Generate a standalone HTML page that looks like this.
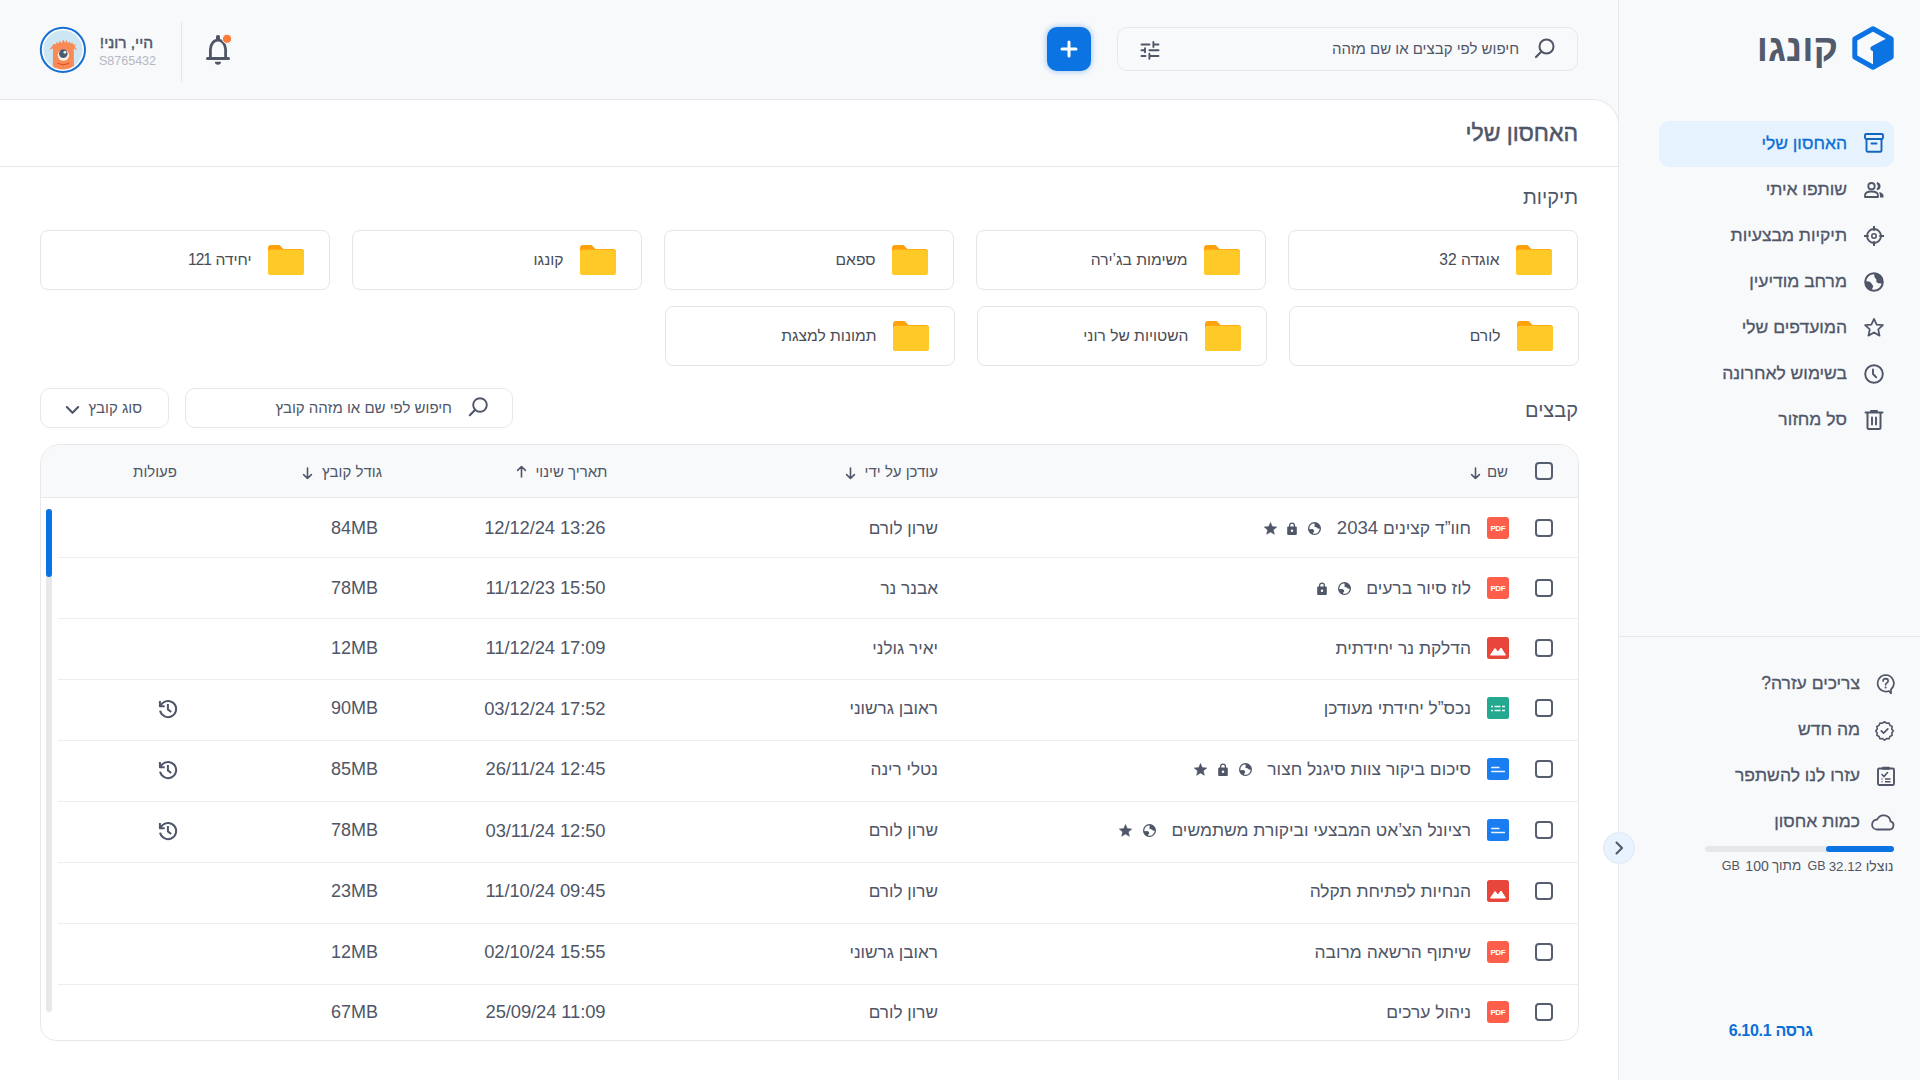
<!DOCTYPE html><html lang="he" dir="rtl"><head><meta charset="utf-8"><title>קונגו</title>
<style>
html,body{margin:0;padding:0;}
body{width:1920px;height:1080px;overflow:hidden;position:relative;background:#f8f9fb;font-family:"Liberation Sans",sans-serif;color:#4f5668;}
.t{position:absolute;white-space:nowrap;direction:rtl;}
.box{position:absolute;box-sizing:border-box;}
.med{-webkit-text-stroke:0.25px currentColor;}
</style></head><body>

<div class="box" style="left:1618px;top:0;width:302px;height:1080px;border-left:1px solid #e6e8ec;background:#f8f9fb"></div>
<svg style="position:absolute;left:1851px;top:26px;" width="44" height="44" viewBox="0 0 44 44"><path d="M22 2.8 L40.2 13 V31 L22 41.2 L3.8 31 V13 Z" fill="none" stroke="#0b74e2" stroke-width="5" stroke-linejoin="round"/><path d="M22 22.5 L39 13.5 V30.5 L22 40 Z" fill="#0b74e2"/><path d="M22 22.5 L38 14" stroke="#0b74e2" stroke-width="5" stroke-linecap="round"/></svg>
<div class="t" style="right:82px;top:24.06px;font-size:37.5px;line-height:49px;font-weight:700;color:#525a6e;">קונגו</div>
<div class="box" style="left:1659px;top:121px;width:235px;height:46px;border-radius:10px;background:#e6f2fd"></div>
<div class="t" style="right:73px;top:131.69px;font-size:17.5px;line-height:23px;font-weight:400;color:#0b6fd6;-webkit-text-stroke:0.3px currentColor">האחסון שלי</div>
<div class="t" style="right:73px;top:177.69px;font-size:17.5px;line-height:23px;font-weight:400;color:#4f5668;-webkit-text-stroke:0.3px currentColor">שותפו איתי</div>
<div class="t" style="right:73px;top:223.69px;font-size:17.5px;line-height:23px;font-weight:400;color:#4f5668;-webkit-text-stroke:0.3px currentColor">תיקיות מבצעיות</div>
<div class="t" style="right:73px;top:269.69px;font-size:17.5px;line-height:23px;font-weight:400;color:#4f5668;-webkit-text-stroke:0.3px currentColor">מרחב מודיעין</div>
<div class="t" style="right:73px;top:315.69px;font-size:17.5px;line-height:23px;font-weight:400;color:#4f5668;-webkit-text-stroke:0.3px currentColor">המועדפים שלי</div>
<div class="t" style="right:73px;top:361.69px;font-size:17.5px;line-height:23px;font-weight:400;color:#4f5668;-webkit-text-stroke:0.3px currentColor">בשימוש לאחרונה</div>
<div class="t" style="right:73px;top:407.69px;font-size:17.5px;line-height:23px;font-weight:400;color:#4f5668;-webkit-text-stroke:0.3px currentColor">סל מחזור</div>
<svg style="position:absolute;left:1864px;top:133px;" width="20" height="20" viewBox="0 0 20 20"><rect x="1" y="1" width="18" height="5" rx="1.2" fill="none" stroke="#1565c0" stroke-width="1.9"/><path d="M2.5 6 V17.5 a1.3 1.3 0 0 0 1.3 1.3 H16.2 a1.3 1.3 0 0 0 1.3 -1.3 V6" fill="none" stroke="#1565c0" stroke-width="1.9"/><path d="M7.5 10.5 H12.5" stroke="#1565c0" stroke-width="1.9" stroke-linecap="round"/></svg>
<svg style="position:absolute;left:1864px;top:182px;" width="20" height="16" viewBox="0 0 20 16"><circle cx="7.5" cy="4.2" r="3.2" fill="none" stroke="#4f5668" stroke-width="1.8"/><path d="M1 15 V13.5 C1 11 3.5 9.5 7.5 9.5 C11.5 9.5 14 11 14 13.5 V15 Z" fill="none" stroke="#4f5668" stroke-width="1.8" stroke-linejoin="round"/><path d="M13 1 A3.3 3.3 0 0 1 13 7.5 A4 4 0 0 0 13 1Z" fill="#4f5668" stroke="#4f5668" stroke-width="1.6"/><path d="M15 10 C18 10.5 19.5 12 19.5 14 V15.5 H16 V14 C16 12.5 15.5 11 15 10Z" fill="#4f5668"/></svg>
<svg style="position:absolute;left:1864px;top:226px;" width="20" height="20" viewBox="0 0 20 20"><circle cx="10" cy="10" r="7" fill="none" stroke="#4f5668" stroke-width="1.8"/><circle cx="10" cy="10" r="2.2" fill="none" stroke="#4f5668" stroke-width="1.6"/><path d="M10 0.5V4 M10 16V19.5 M0.5 10H4 M16 10H19.5" stroke="#4f5668" stroke-width="2" stroke-linecap="round"/></svg>
<svg style="position:absolute;left:1864px;top:272px;" width="20" height="20" viewBox="0 0 20 20"><circle cx="10" cy="10" r="8.8" fill="none" stroke="#4f5668" stroke-width="2"/><path d="M10 1.5 C13 1.5 17 3 18.5 7 L18 12 C16.5 11 14.5 12 13 10.5 C11.5 9 13.5 8 11.5 6.5 C10 5.5 10.5 3 10 1.5Z" fill="#4f5668"/><path d="M1.5 9.5 C4 9 6.5 9.5 7.5 11.5 C8 13 9.5 13 9 15 C8.5 16.5 7.5 17.5 7.5 18.5 C4 17.5 1.5 14 1.5 9.5Z" fill="#4f5668"/></svg>
<svg style="position:absolute;left:1863px;top:317px;" width="22" height="21" viewBox="0 0 24 23"><path d="M12 2 L14.9 8.3 L21.8 9 L16.6 13.6 L18.1 20.4 L12 16.9 L5.9 20.4 L7.4 13.6 L2.2 9 L9.1 8.3 Z" fill="none" stroke="#4f5668" stroke-width="1.9" stroke-linejoin="round"/></svg>
<svg style="position:absolute;left:1864px;top:364px;" width="20" height="20" viewBox="0 0 20 20"><circle cx="10" cy="10" r="8.8" fill="none" stroke="#4f5668" stroke-width="1.9"/><path d="M9 5.5 V10 L12.3 13.3" fill="none" stroke="#4f5668" stroke-width="1.9" stroke-linecap="round" stroke-linejoin="round"/></svg>
<svg style="position:absolute;left:1864px;top:410px;" width="20" height="20" viewBox="0 0 20 20"><path d="M1.5 2.5 H18.5" stroke="#4f5668" stroke-width="2" stroke-linecap="round"/><path d="M7 1 H13" stroke="#4f5668" stroke-width="2" stroke-linecap="round"/><path d="M3.5 3 V17.5 a1.5 1.5 0 0 0 1.5 1.5 H15 a1.5 1.5 0 0 0 1.5 -1.5 V3" fill="none" stroke="#4f5668" stroke-width="2"/><path d="M8 7.5 V14.5 M12 7.5 V14.5" stroke="#4f5668" stroke-width="1.9" stroke-linecap="round"/></svg>
<div class="box" style="left:1619px;top:636px;width:301px;height:1px;background:#e6e8ec"></div>
<div class="t" style="right:60px;top:671.99px;font-size:17.5px;line-height:23px;font-weight:400;color:#4f5668;-webkit-text-stroke:0.3px currentColor">צריכים עזרה?</div>
<div class="t" style="right:60px;top:717.99px;font-size:17.5px;line-height:23px;font-weight:400;color:#4f5668;-webkit-text-stroke:0.3px currentColor">מה חדש</div>
<div class="t" style="right:60px;top:763.99px;font-size:17.5px;line-height:23px;font-weight:400;color:#4f5668;-webkit-text-stroke:0.3px currentColor">עזרו לנו להשתפר</div>
<div class="t" style="right:60px;top:809.99px;font-size:17.5px;line-height:23px;font-weight:400;color:#4f5668;-webkit-text-stroke:0.3px currentColor">כמות אחסון</div>
<svg style="position:absolute;left:1876px;top:674px;" width="19" height="20" viewBox="0 0 19 20"><path d="M9.5 1 A8.3 8.3 0 1 0 13 17 L15 19.5 L15 15.5 A8.3 8.3 0 0 0 9.5 1Z" fill="none" stroke="#4f5668" stroke-width="1.7" stroke-linejoin="round"/><path d="M7 7.3 C7 5.5 8.3 4.6 9.6 4.6 C11 4.6 12.2 5.6 12.2 7 C12.2 8.8 9.6 9 9.6 11" fill="none" stroke="#4f5668" stroke-width="1.6" stroke-linecap="round"/><circle cx="9.6" cy="13.6" r="1" fill="#4f5668"/></svg>
<svg style="position:absolute;left:1874px;top:720px;" width="21" height="21" viewBox="0 0 24 24"><path d="M12 2 L14.3 3.7 L17.2 3.4 L18.2 6.1 L20.8 7.4 L20.3 10.2 L22 12.5 L20.3 14.7 L20.8 17.5 L18.2 18.8 L17.2 21.5 L14.3 21.2 L12 23 L9.7 21.2 L6.8 21.5 L5.8 18.8 L3.2 17.5 L3.7 14.7 L2 12.5 L3.7 10.2 L3.2 7.4 L5.8 6.1 L6.8 3.4 L9.7 3.7 Z" fill="none" stroke="#4f5668" stroke-width="1.8" stroke-linejoin="round"/><path d="M8.3 12.5 L11 15 L15.8 10.2" fill="none" stroke="#4f5668" stroke-width="1.9" stroke-linecap="round" stroke-linejoin="round"/></svg>
<svg style="position:absolute;left:1877px;top:766px;" width="18" height="20" viewBox="0 0 18 20"><rect x="1" y="2.5" width="16" height="16.5" rx="1.2" fill="none" stroke="#4f5668" stroke-width="1.9"/><rect x="5" y="0.8" width="8" height="3" rx="1" fill="#4f5668"/><path d="M5 8.5 L7 10.5 L10.5 6.5" fill="none" stroke="#4f5668" stroke-width="1.6" stroke-linecap="round"/><path d="M4.5 13 H5.5 M8 13 H13.5 M4.5 15.8 H5.5 M8 15.8 H13.5" stroke="#4f5668" stroke-width="1.5"/></svg>
<svg style="position:absolute;left:1871px;top:813px;" width="24" height="18" viewBox="0 0 24 18"><path d="M6 16.5 H18.5 A4.2 4.2 0 0 0 19.5 8.3 A7 7 0 0 0 6.2 6.5 A5 5 0 0 0 6 16.5 Z" fill="none" stroke="#4f5668" stroke-width="1.8" stroke-linejoin="round"/></svg>
<div class="box" style="left:1705px;top:846px;width:189px;height:6px;border-radius:3px;background:#e6e7ea"></div>
<div class="box" style="left:1826px;top:846px;width:68px;height:6px;border-radius:3px;background:#0b74e2"></div>
<div class="t" style="right:26.5px;top:856.65px;font-size:14px;line-height:18px;font-weight:400;color:#505562;">נוצלו</div>
<div class="t" style="right:58px;top:857.77px;font-size:13.3px;line-height:17px;font-weight:400;color:#505562;">32.12</div>
<div class="t" style="right:94.5px;top:858.27px;font-size:12.5px;line-height:16px;font-weight:400;color:#505562;">GB</div>
<div class="t" style="right:118.79999999999995px;top:856.67px;font-size:13.5px;line-height:18px;font-weight:400;color:#505562;">מתוך</div>
<div class="t" style="right:151.29999999999995px;top:857.26px;font-size:14px;line-height:18px;font-weight:400;color:#505562;">100</div>
<div class="t" style="right:180.20000000000005px;top:858.27px;font-size:12.5px;line-height:16px;font-weight:400;color:#505562;">GB</div>
<div class="t" style="right:107.5px;top:1019.76px;font-size:16px;line-height:21px;font-weight:700;color:#0a6fd8;letter-spacing:-0.3px">גרסה 6.10.1</div>
<div class="box" style="left:1117px;top:27px;width:461px;height:44px;border:1px solid #e6e8ec;border-radius:10px;background:#f8f9fb"></div>
<div class="t" style="right:401px;top:38.80px;font-size:15px;line-height:20px;font-weight:400;color:#4f5668;">חיפוש לפי קבצים או שם מזהה</div>
<svg style="position:absolute;left:1534px;top:38px;" width="22" height="21" viewBox="0 0 22 21"><circle cx="12.5" cy="8.5" r="7" fill="none" stroke="#4f5668" stroke-width="2"/><path d="M7.5 13.5 L2 19" stroke="#4f5668" stroke-width="2.2" stroke-linecap="round"/></svg>
<svg style="position:absolute;left:1140px;top:41px;" width="20" height="19" viewBox="0 0 20 19"><path d="M1.5 3.5 H9.5 M13.4 3.5 H18.5 M13.4 1 V6 M1.5 9.3 H5 M5 7.3 V11.3 M9.4 9.3 H18.5 M1.5 15 H5.5 M9.4 15 H18.5 M9.4 12.8 V17.8" stroke="#4f5668" stroke-width="1.9" stroke-linecap="round"/></svg>
<div class="box" style="left:1047px;top:27px;width:44px;height:44px;border-radius:10px;background:#0b74e2;box-shadow:0 0 6px rgba(11,116,226,0.45)"></div>
<svg style="position:absolute;left:1060px;top:40px;" width="18" height="18" viewBox="0 0 18 18"><path d="M9 2 V16 M2 9 H16" stroke="#fff" stroke-width="3" stroke-linecap="round"/></svg>
<svg style="position:absolute;left:200px;top:30px;" width="36" height="40" viewBox="0 0 36 40"><rect x="16" y="5" width="4" height="5" rx="1.6" fill="#4f5668"/><path d="M10.4 27.5 V19.5 A7.6 9.4 0 0 1 25.6 19.5 V27.5" fill="none" stroke="#4f5668" stroke-width="2.8"/><rect x="6" y="27" width="24" height="3" rx="1.5" fill="#4f5668"/><path d="M14.9 31.8 H21 A3.05 3.05 0 0 1 14.9 31.8 Z" fill="#4f5668"/><circle cx="27" cy="8.8" r="4.6" fill="#fb7b3a" stroke="#f8f9fb" stroke-width="1"/></svg>
<div class="box" style="left:181px;top:22px;width:1px;height:60px;background:#e3e5e9"></div>
<div class="t" style="right:1767px;top:32.78px;font-size:15.5px;line-height:20px;font-weight:400;color:#4f5668;-webkit-text-stroke:0.45px currentColor">היי, רוני!</div>
<div class="t" style="right:1764px;top:52.67px;font-size:12.5px;line-height:16px;font-weight:400;color:#b3b8c2;">S8765432</div>
<svg style="position:absolute;left:39px;top:26px;" width="48" height="48" viewBox="0 0 48 48"><circle cx="23.9" cy="23.85" r="22.1" fill="#fff" stroke="#176fd2" stroke-width="2"/><circle cx="23.9" cy="23.85" r="19.6" fill="#cde6f4"/><clipPath id="av"><circle cx="23.9" cy="23.85" r="19.6"/></clipPath><g clip-path="url(#av)"><path d="M13.8 19.5 L10.2 23.8 L14 22.6 L13.8 48 L35 48 L34.8 22.6 L38.2 24.6 L35.5 20 L37.2 18.8 L33.5 18.3 L34 16.5 L31.3 17.5 L31 15 L29 17.2 L27.5 14 L26 16.8 L24.2 13.2 L22.8 17.2 L20.8 14.8 L19.8 17.5 L17.5 15.8 L17.2 18.2 L14 18 Z" fill="#f88b55"/><circle cx="24.4" cy="29.2" r="5.6" fill="#fdf3e8"/><circle cx="24.3" cy="27.6" r="4.3" fill="#4a5a70"/><circle cx="25.9" cy="26.3" r="1.4" fill="#fff"/><path d="M18.9 37.3 Q24.3 39.8 29.7 37.3" fill="none" stroke="#e0532e" stroke-width="1.2" stroke-linecap="round"/></g></svg>
<div class="box" style="left:0;top:99px;width:1619px;height:990px;background:#fff;border-top:1px solid #e6e8ec;border-right:1px solid #e6e8ec;border-top-right-radius:26px"></div>
<div class="t" style="right:342px;top:117.83px;font-size:23px;line-height:30px;font-weight:400;color:#4f5668;-webkit-text-stroke:0.5px currentColor">האחסון שלי</div>
<div class="box" style="left:0;top:166px;width:1618px;height:1px;background:#e6e8ec"></div>
<div class="t" style="right:342px;top:183.67px;font-size:20px;line-height:26px;font-weight:400;color:#4f5668;">תיקיות</div>
<div class="box" style="left:1288px;top:230px;width:290px;height:60px;border:1px solid #e4e5e8;border-radius:8px;background:#fff"></div>
<svg style="position:absolute;left:1516px;top:245px;" width="36" height="30" viewBox="0 0 36 30"><path d="M0 3 A3 3 0 0 1 3 0 H11.5 L15.5 4 H33 A3 3 0 0 1 36 7 V8 H0Z" fill="#ffa10a"/><rect x="0" y="4.8" width="36" height="25.2" rx="2.6" fill="#ffca28"/></svg>
<div class="t" style="right:420.5px;top:250.07px;font-size:15.6px;line-height:20px;font-weight:400;color:#484c55;">אוגדה 32</div>
<div class="box" style="left:976px;top:230px;width:290px;height:60px;border:1px solid #e4e5e8;border-radius:8px;background:#fff"></div>
<svg style="position:absolute;left:1204px;top:245px;" width="36" height="30" viewBox="0 0 36 30"><path d="M0 3 A3 3 0 0 1 3 0 H11.5 L15.5 4 H33 A3 3 0 0 1 36 7 V8 H0Z" fill="#ffa10a"/><rect x="0" y="4.8" width="36" height="25.2" rx="2.6" fill="#ffca28"/></svg>
<div class="t" style="right:732.5px;top:250.07px;font-size:15.6px;line-height:20px;font-weight:400;color:#484c55;">משימות בג’ירה</div>
<div class="box" style="left:664px;top:230px;width:290px;height:60px;border:1px solid #e4e5e8;border-radius:8px;background:#fff"></div>
<svg style="position:absolute;left:892px;top:245px;" width="36" height="30" viewBox="0 0 36 30"><path d="M0 3 A3 3 0 0 1 3 0 H11.5 L15.5 4 H33 A3 3 0 0 1 36 7 V8 H0Z" fill="#ffa10a"/><rect x="0" y="4.8" width="36" height="25.2" rx="2.6" fill="#ffca28"/></svg>
<div class="t" style="right:1044.5px;top:250.07px;font-size:15.6px;line-height:20px;font-weight:400;color:#484c55;">ספאם</div>
<div class="box" style="left:352px;top:230px;width:290px;height:60px;border:1px solid #e4e5e8;border-radius:8px;background:#fff"></div>
<svg style="position:absolute;left:580px;top:245px;" width="36" height="30" viewBox="0 0 36 30"><path d="M0 3 A3 3 0 0 1 3 0 H11.5 L15.5 4 H33 A3 3 0 0 1 36 7 V8 H0Z" fill="#ffa10a"/><rect x="0" y="4.8" width="36" height="25.2" rx="2.6" fill="#ffca28"/></svg>
<div class="t" style="right:1356.5px;top:250.07px;font-size:15.6px;line-height:20px;font-weight:400;color:#484c55;">קונגו</div>
<div class="box" style="left:40px;top:230px;width:290px;height:60px;border:1px solid #e4e5e8;border-radius:8px;background:#fff"></div>
<svg style="position:absolute;left:268px;top:245px;" width="36" height="30" viewBox="0 0 36 30"><path d="M0 3 A3 3 0 0 1 3 0 H11.5 L15.5 4 H33 A3 3 0 0 1 36 7 V8 H0Z" fill="#ffa10a"/><rect x="0" y="4.8" width="36" height="25.2" rx="2.6" fill="#ffca28"/></svg>
<div class="t" style="right:1668.5px;top:250.07px;font-size:15.6px;line-height:20px;font-weight:400;color:#484c55;">יחידה <span style="letter-spacing:-1px">121</span></div>
<div class="box" style="left:1289px;top:306px;width:290px;height:60px;border:1px solid #e4e5e8;border-radius:8px;background:#fff"></div>
<svg style="position:absolute;left:1517px;top:321px;" width="36" height="30" viewBox="0 0 36 30"><path d="M0 3 A3 3 0 0 1 3 0 H11.5 L15.5 4 H33 A3 3 0 0 1 36 7 V8 H0Z" fill="#ffa10a"/><rect x="0" y="4.8" width="36" height="25.2" rx="2.6" fill="#ffca28"/></svg>
<div class="t" style="right:419.5px;top:326.07px;font-size:15.6px;line-height:20px;font-weight:400;color:#484c55;">לורם</div>
<div class="box" style="left:977px;top:306px;width:290px;height:60px;border:1px solid #e4e5e8;border-radius:8px;background:#fff"></div>
<svg style="position:absolute;left:1205px;top:321px;" width="36" height="30" viewBox="0 0 36 30"><path d="M0 3 A3 3 0 0 1 3 0 H11.5 L15.5 4 H33 A3 3 0 0 1 36 7 V8 H0Z" fill="#ffa10a"/><rect x="0" y="4.8" width="36" height="25.2" rx="2.6" fill="#ffca28"/></svg>
<div class="t" style="right:731.5px;top:326.07px;font-size:15.6px;line-height:20px;font-weight:400;color:#484c55;">השטויות של רוני</div>
<div class="box" style="left:665px;top:306px;width:290px;height:60px;border:1px solid #e4e5e8;border-radius:8px;background:#fff"></div>
<svg style="position:absolute;left:893px;top:321px;" width="36" height="30" viewBox="0 0 36 30"><path d="M0 3 A3 3 0 0 1 3 0 H11.5 L15.5 4 H33 A3 3 0 0 1 36 7 V8 H0Z" fill="#ffa10a"/><rect x="0" y="4.8" width="36" height="25.2" rx="2.6" fill="#ffca28"/></svg>
<div class="t" style="right:1043.5px;top:326.07px;font-size:15.6px;line-height:20px;font-weight:400;color:#484c55;">תמונות למצגת</div>
<div class="t" style="right:342px;top:396.57px;font-size:20px;line-height:26px;font-weight:400;color:#4f5668;">קבצים</div>
<div class="box" style="left:185px;top:388px;width:328px;height:40px;border:1px solid #e6e8ec;border-radius:10px;background:#fff"></div>
<div class="t" style="right:1468px;top:397.60px;font-size:15px;line-height:20px;font-weight:400;color:#4f5668;">חיפוש לפי שם או מזהה קובץ</div>
<svg style="position:absolute;left:468px;top:397px;" width="21" height="20" viewBox="0 0 21 20"><circle cx="12" cy="8" r="6.8" fill="none" stroke="#4f5668" stroke-width="1.9"/><path d="M7.2 12.8 L1.8 18.2" stroke="#4f5668" stroke-width="2.1" stroke-linecap="round"/></svg>
<div class="box" style="left:40px;top:388px;width:129px;height:40px;border:1px solid #e6e8ec;border-radius:10px;background:#fff"></div>
<div class="t" style="right:1778px;top:398.10px;font-size:15px;line-height:20px;font-weight:400;color:#4f5668;">סוג קובץ</div>
<svg style="position:absolute;left:65px;top:405px;" width="15" height="10" viewBox="0 0 15 10"><path d="M1.8 2 L7.5 7.8 L13.2 2" fill="none" stroke="#4f5668" stroke-width="2.1" stroke-linecap="round" stroke-linejoin="round"/></svg>
<div class="box" style="left:40px;top:444px;width:1539px;height:597px;border:1px solid #e6e8ec;border-radius:20px 20px 16px 16px;background:#fff;overflow:hidden"><div style="height:52px;background:#f8f9fb;border-bottom:1px solid #e6e8ec"></div></div>
<div class="box" style="left:1535px;top:462px;width:18px;height:18px;border:2px solid #565e70;border-radius:4px"></div>
<div class="t" style="right:412px;top:462.00px;font-size:15px;line-height:20px;font-weight:400;color:#4f5668;">שם</div>
<svg style="position:absolute;left:1470px;top:466.7px;" width="11" height="13" viewBox="0 0 11 13"><path d="M5.5 1 V11.5 M1.6 7.6 L5.5 11.5 L9.4 7.6" fill="none" stroke="#4f5668" stroke-width="1.6" stroke-linecap="round" stroke-linejoin="round"/></svg>
<div class="t" style="right:982px;top:462.00px;font-size:15px;line-height:20px;font-weight:400;color:#4f5668;">עודכן על ידי</div>
<svg style="position:absolute;left:845px;top:466.7px;" width="11" height="13" viewBox="0 0 11 13"><path d="M5.5 1 V11.5 M1.6 7.6 L5.5 11.5 L9.4 7.6" fill="none" stroke="#4f5668" stroke-width="1.6" stroke-linecap="round" stroke-linejoin="round"/></svg>
<div class="t" style="right:1312.5px;top:462.00px;font-size:15px;line-height:20px;font-weight:400;color:#4f5668;">תאריך שינוי</div>
<svg style="position:absolute;left:516px;top:465px;" width="11" height="13" viewBox="0 0 11 13"><path d="M5.5 12 V1.5 M1.6 5.4 L5.5 1.5 L9.4 5.4" fill="none" stroke="#4f5668" stroke-width="1.6" stroke-linecap="round" stroke-linejoin="round"/></svg>
<div class="t" style="right:1538px;top:462.00px;font-size:15px;line-height:20px;font-weight:400;color:#4f5668;">גודל קובץ</div>
<svg style="position:absolute;left:301.5px;top:466.7px;" width="11" height="13" viewBox="0 0 11 13"><path d="M5.5 1 V11.5 M1.6 7.6 L5.5 11.5 L9.4 7.6" fill="none" stroke="#4f5668" stroke-width="1.6" stroke-linecap="round" stroke-linejoin="round"/></svg>
<div class="t" style="right:1743px;top:462.00px;font-size:15px;line-height:20px;font-weight:400;color:#4f5668;">פעולות</div>
<div class="box" style="left:58px;top:557px;width:1520px;height:1px;background:#eceef1"></div>
<div class="box" style="left:1535px;top:519px;width:18px;height:18px;border:2px solid #565e70;border-radius:4px"></div>
<div class="box" style="left:1487px;top:517px;width:22px;height:22px;border-radius:3px;background:#ff5f4a;color:#fff;font-size:8px;font-weight:700;line-height:23.4px;text-align:center;direction:ltr;letter-spacing:-0.45px;text-indent:-0.5px">PDF</div>
<div style="position:absolute;right:449px;top:516.59px;height:22px;display:flex;align-items:center;direction:rtl;white-space:nowrap"><span style="font-size:17.45px;line-height:22px">חוו”ד קצינים <span style="font-size:18.6px">2034</span></span><svg width="13" height="13" viewBox="0 0 13 13" style="margin-right:15.5px;flex:none;position:relative;top:0.9px"><circle cx="6.5" cy="6.5" r="5.85" fill="none" stroke="#4f5668" stroke-width="1.3"/><path d="M6.6 0.7 A5.85 5.85 0 0 1 12.3 6.3 L11.2 6.7 L9.8 6.5 L8.8 5.4 L7.3 5.1 L6.1 4.3 L6.9 3 L6.3 1.8 Z" fill="#4f5668"/><path d="M0.7 7.2 L4.6 7.1 L5.8 8.1 L6.3 9.4 L5.2 10.4 L4.9 12.6 A5.85 5.85 0 0 1 0.7 7.2 Z" fill="#4f5668"/></svg><svg width="10" height="13" viewBox="0 0 10 13" style="margin-right:11px;flex:none;position:relative;top:0.9px"><path d="M2.6 5 V3.5 A2.4 2.4 0 0 1 7.4 3.5 V5" fill="none" stroke="#4f5668" stroke-width="1.3"/><rect x="0.2" y="4.4" width="9.6" height="8.6" rx="1" fill="#4f5668"/><circle cx="5" cy="8.7" r="1.25" fill="#fff"/></svg><svg width="13" height="13" viewBox="0 0 13 13" style="margin-right:10.5px;flex:none;position:relative;top:0.9px"><path d="M6.50 0.40 L8.26 4.57 L12.78 4.96 L9.35 7.93 L10.38 12.34 L6.50 10.00 L2.62 12.34 L3.65 7.93 L0.22 4.96 L4.74 4.57 Z" fill="#4f5668" stroke="#4f5668" stroke-width="0.5" stroke-linejoin="round"/></svg></div>
<div class="t" style="right:982px;top:516.70px;font-size:17.2px;line-height:22px;font-weight:400;color:#4f5668;">שרון לורם</div>
<div class="t" style="right:1314.5px;top:516.25px;font-size:18.4px;line-height:24px;font-weight:400;color:#4f5668;direction:ltr;unicode-bidi:bidi-override;letter-spacing:-0.1px">12/12/24 13:26</div>
<div class="t" style="right:1542px;top:516.76px;font-size:18px;line-height:23px;font-weight:400;color:#4f5668;">84MB</div>
<div class="box" style="left:58px;top:618px;width:1520px;height:1px;background:#eceef1"></div>
<div class="box" style="left:1535px;top:579px;width:18px;height:18px;border:2px solid #565e70;border-radius:4px"></div>
<div class="box" style="left:1487px;top:577px;width:22px;height:22px;border-radius:3px;background:#ff5f4a;color:#fff;font-size:8px;font-weight:700;line-height:23.4px;text-align:center;direction:ltr;letter-spacing:-0.45px;text-indent:-0.5px">PDF</div>
<div style="position:absolute;right:449px;top:576.79px;height:22px;display:flex;align-items:center;direction:rtl;white-space:nowrap"><span style="font-size:17.45px;line-height:22px">לוז סיור ברעים</span><svg width="13" height="13" viewBox="0 0 13 13" style="margin-right:15.5px;flex:none;position:relative;top:0.9px"><circle cx="6.5" cy="6.5" r="5.85" fill="none" stroke="#4f5668" stroke-width="1.3"/><path d="M6.6 0.7 A5.85 5.85 0 0 1 12.3 6.3 L11.2 6.7 L9.8 6.5 L8.8 5.4 L7.3 5.1 L6.1 4.3 L6.9 3 L6.3 1.8 Z" fill="#4f5668"/><path d="M0.7 7.2 L4.6 7.1 L5.8 8.1 L6.3 9.4 L5.2 10.4 L4.9 12.6 A5.85 5.85 0 0 1 0.7 7.2 Z" fill="#4f5668"/></svg><svg width="10" height="13" viewBox="0 0 10 13" style="margin-right:11px;flex:none;position:relative;top:0.9px"><path d="M2.6 5 V3.5 A2.4 2.4 0 0 1 7.4 3.5 V5" fill="none" stroke="#4f5668" stroke-width="1.3"/><rect x="0.2" y="4.4" width="9.6" height="8.6" rx="1" fill="#4f5668"/><circle cx="5" cy="8.7" r="1.25" fill="#fff"/></svg></div>
<div class="t" style="right:982px;top:576.90px;font-size:17.2px;line-height:22px;font-weight:400;color:#4f5668;">אבנר נר</div>
<div class="t" style="right:1314.5px;top:576.45px;font-size:18.4px;line-height:24px;font-weight:400;color:#4f5668;direction:ltr;unicode-bidi:bidi-override;letter-spacing:-0.1px">11/12/23 15:50</div>
<div class="t" style="right:1542px;top:576.96px;font-size:18px;line-height:23px;font-weight:400;color:#4f5668;">78MB</div>
<div class="box" style="left:58px;top:679px;width:1520px;height:1px;background:#eceef1"></div>
<div class="box" style="left:1535px;top:639px;width:18px;height:18px;border:2px solid #565e70;border-radius:4px"></div>
<svg style="position:absolute;left:1487px;top:637px;" width="22" height="22" viewBox="0 0 22 22"><rect width="22" height="22" rx="2.5" fill="#e8463b"/><path d="M3.5 18 L8 11.5 L11 15 L14 11 L18.5 18Z" fill="#fff" stroke="#fff" stroke-width="1" stroke-linejoin="round"/></svg>
<div style="position:absolute;right:449px;top:636.79px;height:22px;display:flex;align-items:center;direction:rtl;white-space:nowrap"><span style="font-size:17.45px;line-height:22px">הדלקת נר יחידתית</span></div>
<div class="t" style="right:982px;top:636.90px;font-size:17.2px;line-height:22px;font-weight:400;color:#4f5668;">יאיר גולני</div>
<div class="t" style="right:1314.5px;top:636.45px;font-size:18.4px;line-height:24px;font-weight:400;color:#4f5668;direction:ltr;unicode-bidi:bidi-override;letter-spacing:-0.1px">11/12/24 17:09</div>
<div class="t" style="right:1542px;top:636.96px;font-size:18px;line-height:23px;font-weight:400;color:#4f5668;">12MB</div>
<div class="box" style="left:58px;top:740px;width:1520px;height:1px;background:#eceef1"></div>
<div class="box" style="left:1535px;top:699px;width:18px;height:18px;border:2px solid #565e70;border-radius:4px"></div>
<svg style="position:absolute;left:1487px;top:697px;" width="22" height="22" viewBox="0 0 22 22"><rect width="22" height="22" rx="2.5" fill="#22a98f"/><path d="M4 9.5H6 M7.5 9.5H13.5 M15 9.5H18 M4 13.5H6 M7.5 13.5H13.5 M15 13.5H18" stroke="#fff" stroke-width="1.6" opacity="0.92"/></svg>
<div style="position:absolute;right:449px;top:696.89px;height:22px;display:flex;align-items:center;direction:rtl;white-space:nowrap"><span style="font-size:17.45px;line-height:22px">נכס”ל יחידתי מעודכן</span></div>
<div class="t" style="right:982px;top:697.00px;font-size:17.2px;line-height:22px;font-weight:400;color:#4f5668;">ראובן גרשוני</div>
<div class="t" style="right:1314.5px;top:696.55px;font-size:18.4px;line-height:24px;font-weight:400;color:#4f5668;direction:ltr;unicode-bidi:bidi-override;letter-spacing:-0.1px">03/12/24 17:52</div>
<div class="t" style="right:1542px;top:697.06px;font-size:18px;line-height:23px;font-weight:400;color:#4f5668;">90MB</div>
<svg style="position:absolute;left:156px;top:697px;" width="24" height="24" viewBox="0 0 24 24"><path d="M4.1 13.6 A8.1 8.1 0 1 0 6.2 6.4 L4.2 8.9" fill="none" stroke="#4f5668" stroke-width="2"/><path d="M3.9 4 V9.3 H8.7" fill="none" stroke="#4f5668" stroke-width="2" stroke-linejoin="round"/><path d="M11.9 7.1 V12.4 L15.2 15" fill="none" stroke="#4f5668" stroke-width="2" stroke-linejoin="round"/></svg>
<div class="box" style="left:58px;top:801px;width:1520px;height:1px;background:#eceef1"></div>
<div class="box" style="left:1535px;top:760px;width:18px;height:18px;border:2px solid #565e70;border-radius:4px"></div>
<svg style="position:absolute;left:1487px;top:758px;" width="22" height="22" viewBox="0 0 22 22"><rect width="22" height="22" rx="2.5" fill="#1a7ef0"/><path d="M4.2 9.5H12.5 M4.2 13.5H18" stroke="#fff" stroke-width="1.7" opacity="0.92"/></svg>
<div style="position:absolute;right:449px;top:757.79px;height:22px;display:flex;align-items:center;direction:rtl;white-space:nowrap"><span style="font-size:17.45px;line-height:22px">סיכום ביקור צוות סיגנל חצור</span><svg width="13" height="13" viewBox="0 0 13 13" style="margin-right:15.5px;flex:none;position:relative;top:0.9px"><circle cx="6.5" cy="6.5" r="5.85" fill="none" stroke="#4f5668" stroke-width="1.3"/><path d="M6.6 0.7 A5.85 5.85 0 0 1 12.3 6.3 L11.2 6.7 L9.8 6.5 L8.8 5.4 L7.3 5.1 L6.1 4.3 L6.9 3 L6.3 1.8 Z" fill="#4f5668"/><path d="M0.7 7.2 L4.6 7.1 L5.8 8.1 L6.3 9.4 L5.2 10.4 L4.9 12.6 A5.85 5.85 0 0 1 0.7 7.2 Z" fill="#4f5668"/></svg><svg width="10" height="13" viewBox="0 0 10 13" style="margin-right:11px;flex:none;position:relative;top:0.9px"><path d="M2.6 5 V3.5 A2.4 2.4 0 0 1 7.4 3.5 V5" fill="none" stroke="#4f5668" stroke-width="1.3"/><rect x="0.2" y="4.4" width="9.6" height="8.6" rx="1" fill="#4f5668"/><circle cx="5" cy="8.7" r="1.25" fill="#fff"/></svg><svg width="13" height="13" viewBox="0 0 13 13" style="margin-right:10.5px;flex:none;position:relative;top:0.9px"><path d="M6.50 0.40 L8.26 4.57 L12.78 4.96 L9.35 7.93 L10.38 12.34 L6.50 10.00 L2.62 12.34 L3.65 7.93 L0.22 4.96 L4.74 4.57 Z" fill="#4f5668" stroke="#4f5668" stroke-width="0.5" stroke-linejoin="round"/></svg></div>
<div class="t" style="right:982px;top:757.90px;font-size:17.2px;line-height:22px;font-weight:400;color:#4f5668;">נטלי רינה</div>
<div class="t" style="right:1314.5px;top:757.45px;font-size:18.4px;line-height:24px;font-weight:400;color:#4f5668;direction:ltr;unicode-bidi:bidi-override;letter-spacing:-0.1px">26/11/24 12:45</div>
<div class="t" style="right:1542px;top:757.96px;font-size:18px;line-height:23px;font-weight:400;color:#4f5668;">85MB</div>
<svg style="position:absolute;left:156px;top:758px;" width="24" height="24" viewBox="0 0 24 24"><path d="M4.1 13.6 A8.1 8.1 0 1 0 6.2 6.4 L4.2 8.9" fill="none" stroke="#4f5668" stroke-width="2"/><path d="M3.9 4 V9.3 H8.7" fill="none" stroke="#4f5668" stroke-width="2" stroke-linejoin="round"/><path d="M11.9 7.1 V12.4 L15.2 15" fill="none" stroke="#4f5668" stroke-width="2" stroke-linejoin="round"/></svg>
<div class="box" style="left:58px;top:862px;width:1520px;height:1px;background:#eceef1"></div>
<div class="box" style="left:1535px;top:821px;width:18px;height:18px;border:2px solid #565e70;border-radius:4px"></div>
<svg style="position:absolute;left:1487px;top:819px;" width="22" height="22" viewBox="0 0 22 22"><rect width="22" height="22" rx="2.5" fill="#1a7ef0"/><path d="M4.2 9.5H12.5 M4.2 13.5H18" stroke="#fff" stroke-width="1.7" opacity="0.92"/></svg>
<div style="position:absolute;right:449px;top:818.89px;height:22px;display:flex;align-items:center;direction:rtl;white-space:nowrap"><span style="font-size:17.45px;line-height:22px">רציונל הצ’אט המבצעי וביקורת משתמשים</span><svg width="13" height="13" viewBox="0 0 13 13" style="margin-right:15.5px;flex:none;position:relative;top:0.9px"><circle cx="6.5" cy="6.5" r="5.85" fill="none" stroke="#4f5668" stroke-width="1.3"/><path d="M6.6 0.7 A5.85 5.85 0 0 1 12.3 6.3 L11.2 6.7 L9.8 6.5 L8.8 5.4 L7.3 5.1 L6.1 4.3 L6.9 3 L6.3 1.8 Z" fill="#4f5668"/><path d="M0.7 7.2 L4.6 7.1 L5.8 8.1 L6.3 9.4 L5.2 10.4 L4.9 12.6 A5.85 5.85 0 0 1 0.7 7.2 Z" fill="#4f5668"/></svg><svg width="13" height="13" viewBox="0 0 13 13" style="margin-right:10.5px;flex:none;position:relative;top:0.9px"><path d="M6.50 0.40 L8.26 4.57 L12.78 4.96 L9.35 7.93 L10.38 12.34 L6.50 10.00 L2.62 12.34 L3.65 7.93 L0.22 4.96 L4.74 4.57 Z" fill="#4f5668" stroke="#4f5668" stroke-width="0.5" stroke-linejoin="round"/></svg></div>
<div class="t" style="right:982px;top:819.00px;font-size:17.2px;line-height:22px;font-weight:400;color:#4f5668;">שרון לורם</div>
<div class="t" style="right:1314.5px;top:818.55px;font-size:18.4px;line-height:24px;font-weight:400;color:#4f5668;direction:ltr;unicode-bidi:bidi-override;letter-spacing:-0.1px">03/11/24 12:50</div>
<div class="t" style="right:1542px;top:819.06px;font-size:18px;line-height:23px;font-weight:400;color:#4f5668;">78MB</div>
<svg style="position:absolute;left:156px;top:819px;" width="24" height="24" viewBox="0 0 24 24"><path d="M4.1 13.6 A8.1 8.1 0 1 0 6.2 6.4 L4.2 8.9" fill="none" stroke="#4f5668" stroke-width="2"/><path d="M3.9 4 V9.3 H8.7" fill="none" stroke="#4f5668" stroke-width="2" stroke-linejoin="round"/><path d="M11.9 7.1 V12.4 L15.2 15" fill="none" stroke="#4f5668" stroke-width="2" stroke-linejoin="round"/></svg>
<div class="box" style="left:58px;top:923px;width:1520px;height:1px;background:#eceef1"></div>
<div class="box" style="left:1535px;top:882px;width:18px;height:18px;border:2px solid #565e70;border-radius:4px"></div>
<svg style="position:absolute;left:1487px;top:880px;" width="22" height="22" viewBox="0 0 22 22"><rect width="22" height="22" rx="2.5" fill="#e8463b"/><path d="M3.5 18 L8 11.5 L11 15 L14 11 L18.5 18Z" fill="#fff" stroke="#fff" stroke-width="1" stroke-linejoin="round"/></svg>
<div style="position:absolute;right:449px;top:879.79px;height:22px;display:flex;align-items:center;direction:rtl;white-space:nowrap"><span style="font-size:17.45px;line-height:22px">הנחיות לפתיחת תקלה</span></div>
<div class="t" style="right:982px;top:879.90px;font-size:17.2px;line-height:22px;font-weight:400;color:#4f5668;">שרון לורם</div>
<div class="t" style="right:1314.5px;top:879.45px;font-size:18.4px;line-height:24px;font-weight:400;color:#4f5668;direction:ltr;unicode-bidi:bidi-override;letter-spacing:-0.1px">11/10/24 09:45</div>
<div class="t" style="right:1542px;top:879.96px;font-size:18px;line-height:23px;font-weight:400;color:#4f5668;">23MB</div>
<div class="box" style="left:58px;top:984px;width:1520px;height:1px;background:#eceef1"></div>
<div class="box" style="left:1535px;top:943px;width:18px;height:18px;border:2px solid #565e70;border-radius:4px"></div>
<div class="box" style="left:1487px;top:941px;width:22px;height:22px;border-radius:3px;background:#ff5f4a;color:#fff;font-size:8px;font-weight:700;line-height:23.4px;text-align:center;direction:ltr;letter-spacing:-0.45px;text-indent:-0.5px">PDF</div>
<div style="position:absolute;right:449px;top:940.79px;height:22px;display:flex;align-items:center;direction:rtl;white-space:nowrap"><span style="font-size:17.45px;line-height:22px">שיתוף הרשאה מרובה</span></div>
<div class="t" style="right:982px;top:940.90px;font-size:17.2px;line-height:22px;font-weight:400;color:#4f5668;">ראובן גרשוני</div>
<div class="t" style="right:1314.5px;top:940.45px;font-size:18.4px;line-height:24px;font-weight:400;color:#4f5668;direction:ltr;unicode-bidi:bidi-override;letter-spacing:-0.1px">02/10/24 15:55</div>
<div class="t" style="right:1542px;top:940.96px;font-size:18px;line-height:23px;font-weight:400;color:#4f5668;">12MB</div>
<div class="box" style="left:1535px;top:1003px;width:18px;height:18px;border:2px solid #565e70;border-radius:4px"></div>
<div class="box" style="left:1487px;top:1001px;width:22px;height:22px;border-radius:3px;background:#ff5f4a;color:#fff;font-size:8px;font-weight:700;line-height:23.4px;text-align:center;direction:ltr;letter-spacing:-0.45px;text-indent:-0.5px">PDF</div>
<div style="position:absolute;right:449px;top:1000.79px;height:22px;display:flex;align-items:center;direction:rtl;white-space:nowrap"><span style="font-size:17.45px;line-height:22px">ניהול ערכים</span></div>
<div class="t" style="right:982px;top:1000.90px;font-size:17.2px;line-height:22px;font-weight:400;color:#4f5668;">שרון לורם</div>
<div class="t" style="right:1314.5px;top:1000.45px;font-size:18.4px;line-height:24px;font-weight:400;color:#4f5668;direction:ltr;unicode-bidi:bidi-override;letter-spacing:-0.1px">25/09/24 11:09</div>
<div class="t" style="right:1542px;top:1000.96px;font-size:18px;line-height:23px;font-weight:400;color:#4f5668;">67MB</div>
<div class="box" style="left:46px;top:509px;width:6px;height:503px;border-radius:3px;background:#e8e8ea"></div>
<div class="box" style="left:46px;top:509px;width:6px;height:68px;border-radius:3px;background:#0b74e2"></div>
<div class="box" style="left:1603px;top:832px;width:32px;height:32px;border-radius:50%;background:#e9f3fd;border:1px solid #dfe8f3"></div>
<svg style="position:absolute;left:1612px;top:840px;" width="14" height="16" viewBox="0 0 14 16"><path d="M4.5 2.5 L10 8 L4.5 13.5" fill="none" stroke="#4f5668" stroke-width="2" stroke-linecap="round" stroke-linejoin="round"/></svg>
</body></html>
